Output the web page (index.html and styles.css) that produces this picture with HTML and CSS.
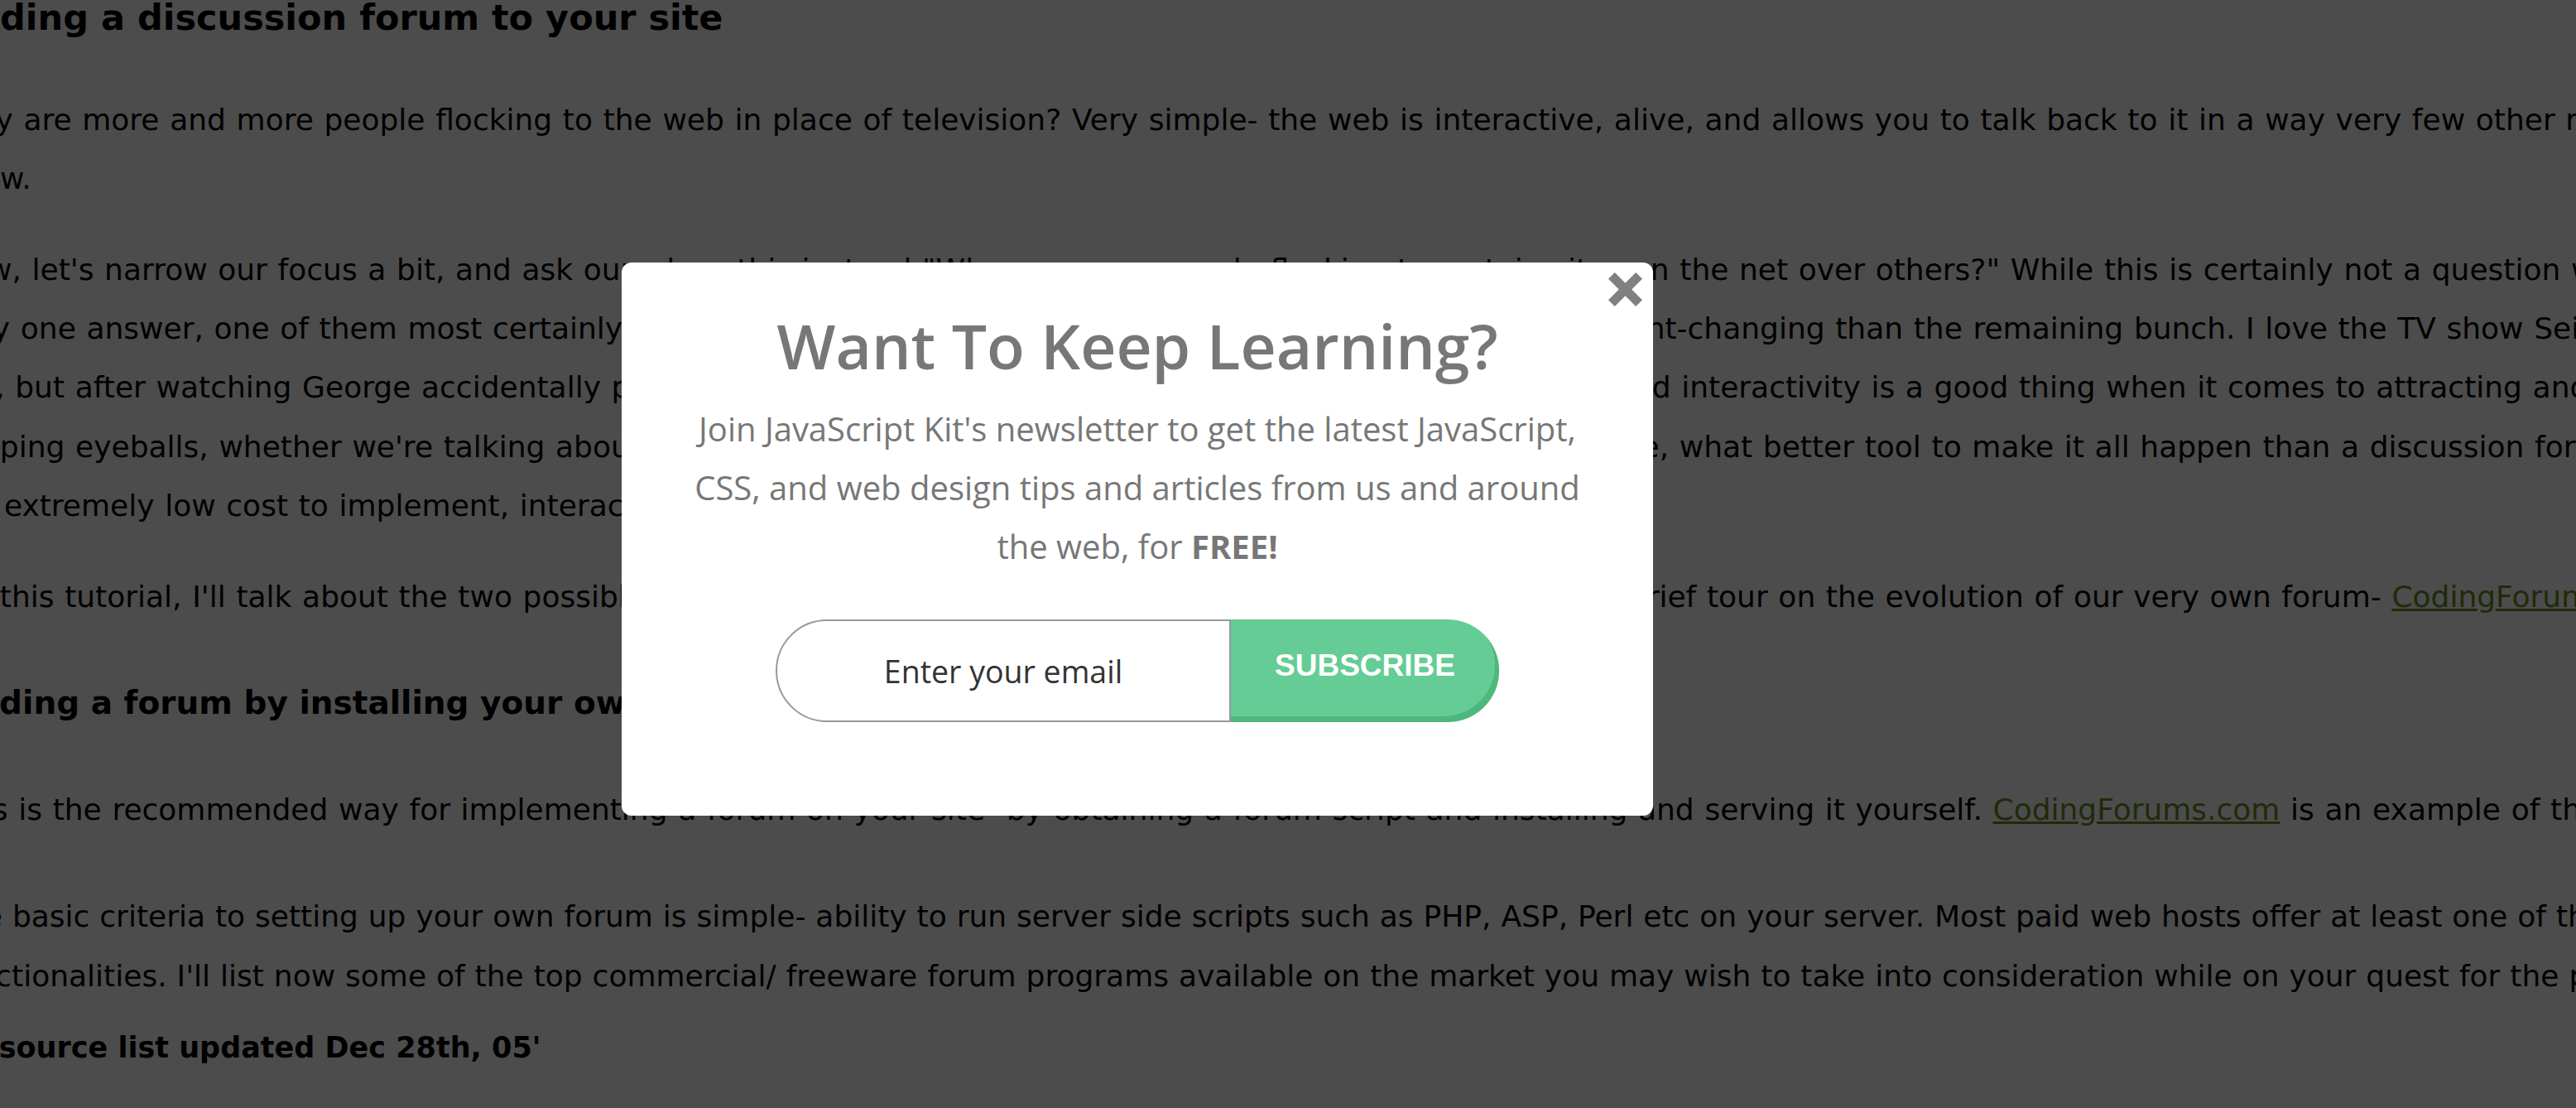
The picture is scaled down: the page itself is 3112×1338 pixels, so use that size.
FILE: index.html
```html
<!DOCTYPE html>
<html lang="en">
<head>
<meta charset="utf-8">
<title>Adding a discussion forum to your site</title>
<link rel="stylesheet" href="styles.css">
</head>
<body>
<main class="article">
  <h1 class="h-main">Adding a discussion forum to your site</h1>
  <p>Why are more and more people flocking to the web in place of television? Very simple- the web is interactive, alive, and allows you to talk back to it in a way very few other mediums can<br>allow.</p>
  <p>Now, let's narrow our focus a bit, and ask ourselves this instead "Why are more people flocking to certain sites on the net over others?" While this is certainly not a question with<br>only one answer, one of them most certainly is interactivity- interactive sites are more alive, vibrant, and constant-changing than the remaining bunch. I love the TV show Seinfeld<br>too, but after watching George accidentally push an old lady out of the way for the 100th time, I'm convinced and interactivity is a good thing when it comes to attracting and<br>keeping eyeballs, whether we're talking about TV or on the web. And when it comes to running your own website, what better tool to make it all happen than a discussion forum?<br>For extremely low cost to implement, interactivity, and a built-in community, a forum is hard to beat.</p>
  <p>On this tutorial, I'll talk about the two possible ways to add a forum to your own site, and at last take you on a brief tour on the evolution of our very own forum- <a href="#">CodingForums.com</a>.</p>
  <h2 class="h-sub">Adding a forum by installing your own forum script</h2>
  <p class="p-spaced">This is the recommended way for implementing a forum on your site- by obtaining a forum script and installing and serving it yourself. <a href="#">CodingForums.com</a> is an example of this.</p>
  <p class="p-last">The basic criteria to setting up your own forum is simple- ability to run server side scripts such as PHP, ASP, Perl etc on your server. Most paid web hosts offer at least one of these<br>functionalities. I'll list now some of the top commercial/ freeware forum programs available on the market you may wish to take into consideration while on your quest for the perfect forum.</p>
  <h3 class="h-small">Resource list updated Dec 28th, 05'</h3>
</main>

<div class="overlay"></div>

<section class="modal" aria-label="Newsletter signup">
  <button class="close" type="button" aria-label="Close">
    <svg viewBox="0 0 41 41" width="41" height="41" aria-hidden="true">
      <g fill="#808080">
        <rect x="-3" y="15" width="47" height="11" transform="rotate(45 20.5 20.5)"/>
        <rect x="-3" y="15" width="47" height="11" transform="rotate(-45 20.5 20.5)"/>
      </g>
    </svg>
  </button>
  <h2 class="modal-title">Want To Keep Learning?</h2>
  <p class="modal-text">Join JavaScript Kit's newsletter to get the latest JavaScript,<br>CSS, and web design tips and articles from us and around<br>the web, for <strong>FREE!</strong></p>
  <form class="signup" onsubmit="return false;">
    <input class="email" type="email" placeholder="Enter your email">
    <button class="subscribe" type="submit">SUBSCRIBE</button>
  </form>
</section>
</body>
</html>
```

FILE: styles.css
```css
* {
  box-sizing: border-box;
}

html,
body {
  margin: 0;
  padding: 0;
}

body {
  position: relative;
  width: 3112px;
  height: 1338px;
  overflow: hidden;
  background: #ffffff;
  color: #000000;
  font-family: "DejaVu Sans", Verdana, sans-serif;
}

/* ---------- article underneath ---------- */
.article {
  margin-left: -64px;
  white-space: nowrap;
  font-size: 36px;
  line-height: 71.4px;
  word-spacing: 1.22px;
}

.article p {
  margin: 0 0 38px;
}

.article .p-spaced {
  margin-bottom: 57.6px;
}

.article .p-last {
  margin-bottom: 33px;
  word-spacing: 0.5px;
}

.article a {
  color: #6b8e23;
  text-decoration: underline;
}

.h-main {
  margin: 0 0 65.8px;
  font-size: 43px;
  line-height: 43px;
  font-weight: bold;
  word-spacing: 0;
}

.h-sub {
  margin: 73px 0 74.4px;
  padding-left: 5px;
  font-size: 39px;
  line-height: 39px;
  font-weight: bold;
  word-spacing: 0;
}

.h-small {
  margin: 33px 0 0;
  padding-left: 12px;
  font-size: 35px;
  line-height: 36px;
  font-weight: bold;
  word-spacing: 0;
}

/* ---------- dimming overlay ---------- */
.overlay {
  position: fixed;
  inset: 0;
  background: rgba(0, 0, 0, 0.7);
}

/* ---------- modal ---------- */
.modal {
  position: absolute;
  left: 751px;
  top: 317px;
  width: 1246px;
  padding: 55px 0 113px;
  background: #ffffff;
  border-radius: 12px;
  text-align: center;
  font-family: "Open Sans", "Liberation Sans", sans-serif;
}

.close {
  position: absolute;
  top: 12px;
  right: 13px;
  width: 41px;
  height: 41px;
  padding: 0;
  border: 0;
  background: none;
  cursor: pointer;
}

.close svg {
  display: block;
}

.modal-title {
  margin: 0;
  font-size: 75px;
  line-height: 91.2px;
  font-weight: 600;
  color: #777777;
}

.modal-text {
  margin: 18.3px 0 0;
  font-size: 40px;
  line-height: 71.4px;
  color: #777777;
}

.modal-text strong {
  font-weight: 700;
}

.signup {
  display: flex;
  justify-content: center;
  margin: 52.3px 0 0;
}

.email {
  width: 550px;
  height: 124px;
  padding: 0 20px;
  border: 2px solid #999999;
  border-radius: 62px 0 0 62px;
  background: #ffffff;
  color: #333333;
  font-family: "Open Sans", sans-serif;
  font-size: 37.5px;
  text-align: center;
  outline: none;
}

.email::placeholder {
  color: #333333;
  opacity: 1;
}

.subscribe {
  width: 324px;
  height: 124px;
  padding: 0 0 12px;
  border: 0;
  border-radius: 0 62px 62px 0;
  background: #66cc96;
  box-shadow: inset -5px -7px 0 #4db87c;
  color: #ffffff;
  font-family: "Liberation Sans", Arial, sans-serif;
  font-size: 37px;
  font-weight: bold;
  cursor: pointer;
}
```
